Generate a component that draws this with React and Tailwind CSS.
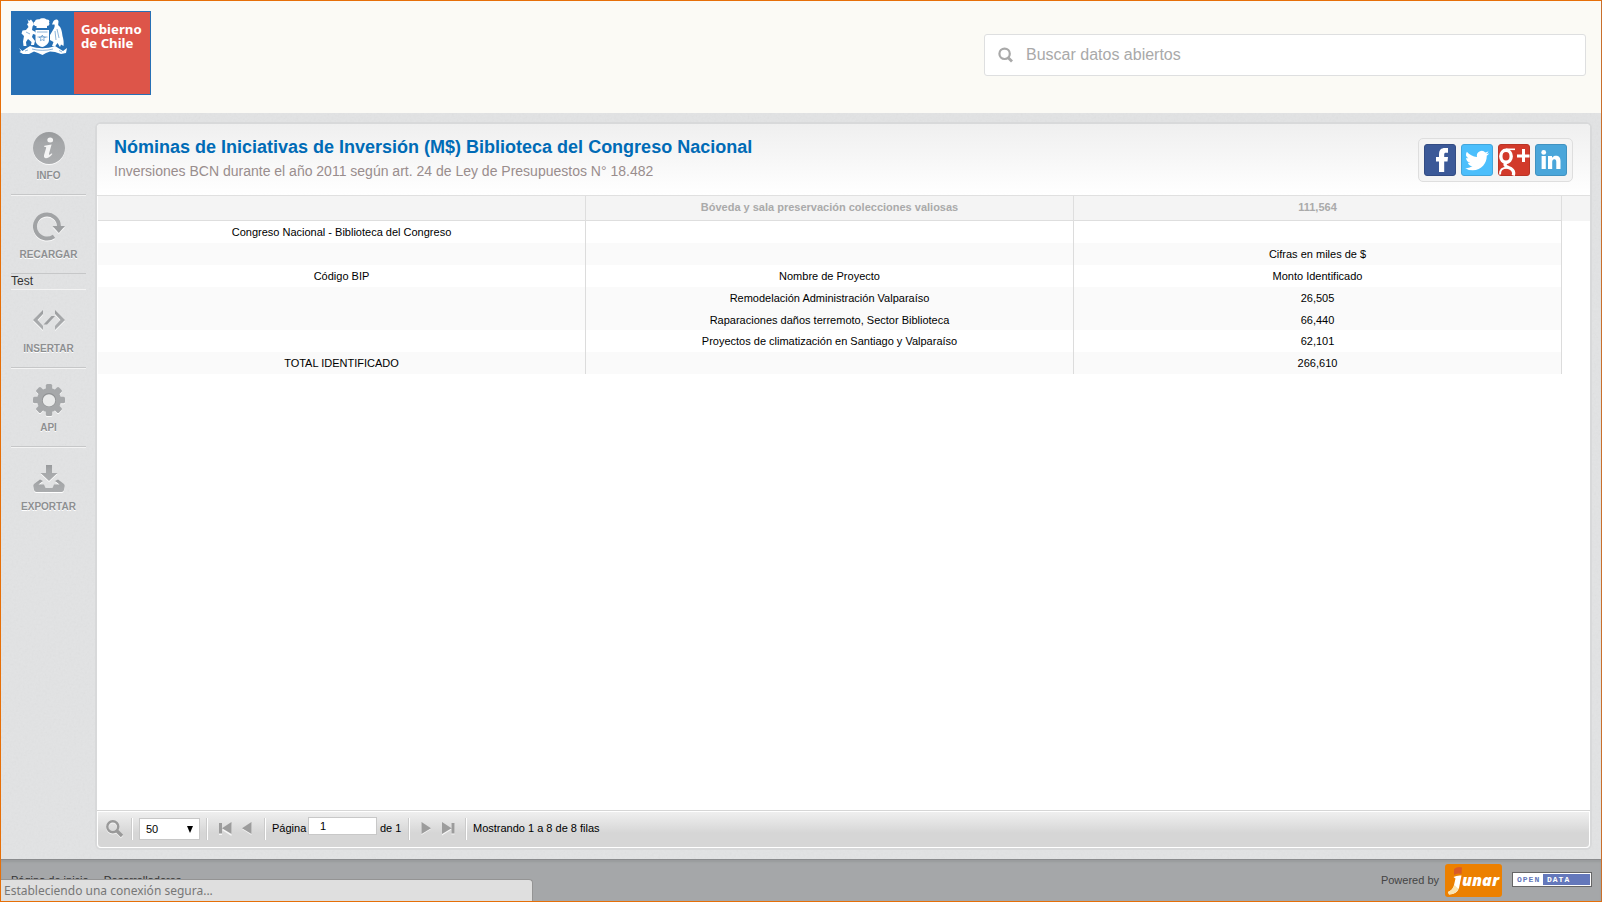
import React from 'react';

const columns = [
  { title: '' },
  { title: 'Bóveda y sala preservación colecciones valiosas' },
  { title: '111,564' },
];

const rows = [
  { cells: ['Congreso Nacional - Biblioteca del Congreso', '', ''], tone: 'h-[22px] bg-white' },
  { cells: ['', '', 'Cifras en miles de $'], tone: 'h-[22px] bg-[#fafafa]' },
  { cells: ['Código BIP', 'Nombre de Proyecto', 'Monto Identificado'], tone: 'h-[22px] bg-white' },
  { cells: ['', 'Remodelación Administración Valparaíso', '26,505'], tone: 'h-[22px] bg-[#fafafa]' },
  { cells: ['', 'Raparaciones daños terremoto, Sector Biblioteca', '66,440'], tone: 'h-[21px] bg-[#fafafa]' },
  { cells: ['', 'Proyectos de climatización en Santiago y Valparaíso', '62,101'], tone: 'h-[22px] bg-white' },
  { cells: ['TOTAL IDENTIFICADO', '', '266,610'], tone: 'h-[22px] bg-[#fafafa]' },
];

function Defs() {
  return (
    <svg width="0" height="0" className="absolute">
      <defs>
        <linearGradient id="metal" x1="0" y1="0" x2="0" y2="1">
          <stop offset="0" stopColor="#989a9c" />
          <stop offset="0.35" stopColor="#a5a7a9" />
          <stop offset="1" stopColor="#abadaf" />
        </linearGradient>
      </defs>
    </svg>
  );
}

function Grain() {
  return (
    <svg className="pointer-events-none absolute inset-0 h-full w-full opacity-[0.07]">
      <filter id="grain">
        <feTurbulence type="fractalNoise" baseFrequency="0.45" numOctaves="2" stitchTiles="stitch" />
        <feColorMatrix type="saturate" values="0" />
      </filter>
      <rect width="100%" height="100%" filter="url(#grain)" />
    </svg>
  );
}

function CoatOfArms() {
  return (
    <svg width="50" height="38" viewBox="0 0 50 38" className="block" fill="#fff">
      <path d="M17 8 C15 6 15 4 17 3.5 C17 1.5 20 1 21 1.5 C23 -0.3 27 -0.2 28.5 1.5 C31 1.2 32 3 31 4.5 C32 6.5 31 8 29 8 L29 10 L18.5 10 L18.5 8 Z" />
      <path d="M17.5 12 H31 V22 C31 26 27 28.5 24.2 29 C21 28.5 17.5 26 17.5 22 Z" />
      <path d="M9.5 1 L11 3 L13 1.5 L14.5 3.5 L16 6.5 L14.5 8.5 L14 12 L17.5 14 L18.5 17 L15 16 L14 19 L17 23 L16 27 L13 27 L13.5 24 L10 21 L8 24 L8.5 28 L5.5 28 L5 23.5 L6 18 L3.5 15.5 L4.5 12.5 L8 12 L10.5 9 L9 6 L10.5 5 Z" />
      <path d="M35 4 C36 1 40 0.5 40.5 3.5 C40.5 5.5 39.8 6.5 40.5 7.5 C43 9 44 13 44.5 18 C45.5 21 46 25 45.5 28 L43 26.5 L42 29 L39.5 25 L37 28.5 L34 28 L35.5 24 L32 22 L32 17 L35 12 C36.5 10 37 8 36.5 6.5 L34 6.5 Z" />
      <path d="M1 30 L4.5 33 L8 30.5 L12 28 C20 31 29 31 37 28 L41 30.5 L45 33 L49 30 L48 35 L43 36 L37 34 L32 33.5 L28 35 L24.5 37 L20 35 L16 33.5 L11 36 L5 36 L1.5 34 L3 33 Z" />
      <path d="M19 14 h10.5 M19.5 19 h10 M24.3 17 l1 2 2 .2 -1.5 1.5 .4 2 -1.9 -1 -1.9 1 .4 -2 -1.5 -1.5 2 -.2 z M14 31 c6 1.8 15 1.8 21 0 M7 33 l3 -1 M41 32.5 l3 1.5 M8 14 l4 2 M39 11 l2 9 M37 13 l1 9" fill="none" stroke="#2770b5" strokeWidth="0.8" opacity="0.65" />
    </svg>
  );
}

function Logo() {
  return (
    <div className="flex h-[84px] w-[140px] border border-[#2770b5] bg-[#dd5549]">
      <div className="h-full w-[62px] bg-[#2770b5] pl-[6px] pt-[6px]">
        <CoatOfArms />
      </div>
      <div className="pl-[7px] pt-[10px] font-['Noto_Sans',sans-serif] text-[13.2px] font-bold leading-[14px] text-white">
        <div>Gobierno</div>
        <div>de Chile</div>
      </div>
    </div>
  );
}

const icons = {
  info: (
    <svg width="32" height="33" viewBox="0 0 32 33">
      <circle cx="16" cy="17" r="16" fill="#fff" opacity="0.8" />
      <circle cx="16" cy="16" r="16" fill="url(#metal)" />
      <g fill="#f4f4f4">
        <ellipse cx="17.2" cy="8" rx="2.9" ry="2.5" />
        <path d="M11.4 13.8 L18.6 12.6 L16 21.8 C15.7 23.2 16.8 22.9 18.8 21.2 L19.4 22 C17 25 14.6 26.3 12.8 26.2 C10.8 26 10.7 24.4 11.2 22.6 L13.2 15.8 C13.4 15 12.6 14.8 11.2 15 Z" />
      </g>
    </svg>
  ),
  reload: (
    <svg width="32" height="30" viewBox="0 0 32 30">
      <g transform="translate(0 1)" fill="none" stroke="#fff" strokeWidth="4" opacity="0.8">
        <path d="M21 24.3 A12 12 0 1 1 26 14.5" />
      </g>
      <path d="M19.5 15.5 H32 L25.8 22 Z" fill="#fff" opacity="0.8" />
      <path d="M21 24.3 A12 12 0 1 1 26 14.5" fill="none" stroke="#a1a3a5" strokeWidth="4" />
      <path d="M19.5 14 H32 L25.8 21 Z" fill="#9d9fa1" />
    </svg>
  ),
  code: (
    <svg width="32" height="22" viewBox="0 0 32 22">
      <g fill="#fff" transform="translate(0 1)">
        <path d="M10 0 V4 L4.5 10 L10 16 V20 L0 10 Z M22 0 V4 L27.5 10 L22 16 V20 L32 10 Z" />
      </g>
      <path d="M10 0 V4 L4.5 10 L10 16 V20 L0 10 Z M22 0 V4 L27.5 10 L22 16 V20 L32 10 Z" fill="url(#metal)" />
      <path d="M10.5 14.5 L18.5 6 H22 L14 14.5 Z" fill="#9d9fa1" />
    </svg>
  ),
  gear: (
    <svg width="32" height="33" viewBox="0 0 32 33">
      <g id="gear-shape">
        <g fill="#fff" opacity="0.8" transform="translate(0 1)">
          {[0, 45, 90, 135].map((a) => (
            <rect key={a} x="12.8" y="0" width="6.4" height="32" rx="1.5" transform={`rotate(${a} 16 16)`} />
          ))}
        </g>
        <g fill="#a6a8aa">
          {[0, 45, 90, 135].map((a) => (
            <rect key={a} x="12.8" y="0" width="6.4" height="32" rx="1.5" transform={`rotate(${a} 16 16)`} />
          ))}
          <circle cx="16" cy="16" r="12" />
        </g>
        <circle cx="16" cy="16" r="7" fill="#8f9193" />
        <circle cx="16" cy="16.4" r="6.2" fill="#e9eaea" />
      </g>
    </svg>
  ),
  download: (
    <svg width="32" height="28" viewBox="0 0 32 28">
      <g fill="#fff" transform="translate(0 1)">
        <path d="M13 0 H19 V8 H24.5 L16 16 L7.5 8 H13 Z" />
        <path d="M7 14.5 L10 16 L5.5 19.5 H11 L12.5 23 H19.5 L21 19.5 H26.5 L22 16 L25 14.5 L31 19 Q32 20 31.7 21.5 L31 25 Q30.6 27 28.6 27 H3.4 Q1.4 27 1 25 L0.3 21.5 Q0 20 1 19 Z" />
      </g>
      <path d="M13 0 H19 V8 H24.5 L16 16 L7.5 8 H13 Z" fill="url(#metal)" />
      <path d="M7 14.5 L10 16 L5.5 19.5 H11 L12.5 23 H19.5 L21 19.5 H26.5 L22 16 L25 14.5 L31 19 Q32 20 31.7 21.5 L31 25 Q30.6 27 28.6 27 H3.4 Q1.4 27 1 25 L0.3 21.5 Q0 20 1 19 Z" fill="url(#metal)" />
    </svg>
  ),
};

function SideItem({ icon, label, first, last }) {
  return (
    <li
      className={
        'flex h-[79px] flex-col items-center border-b border-t pt-[15px] ' +
        (first ? 'border-t-transparent ' : 'border-t-[#f3f3f3] ') +
        (last ? 'border-b-transparent' : 'border-b-[#c6c7c8]')
      }
    >
      <span className="flex h-8 items-center justify-center">{icons[icon]}</span>
      <span className="mt-[6px] text-[10px] font-bold leading-[12px] text-[#8d8f91] [text-shadow:0_1px_0_#fff]">
        {label}
      </span>
    </li>
  );
}

function Sidebar() {
  return (
    <ul className="relative ml-[10px] mt-[3px] w-[75px] shrink-0">
      <SideItem icon="info" label="INFO" first />
      <SideItem icon="reload" label="RECARGAR" />
      <li className="h-[15px] text-[12px] leading-[15px] text-[#333]">Test</li>
      <SideItem icon="code" label="INSERTAR" />
      <SideItem icon="gear" label="API" />
      <SideItem icon="download" label="EXPORTAR" last />
    </ul>
  );
}

function Social() {
  return (
    <div className="mr-[17px] mt-[14px] flex h-[44px] w-[155px] gap-[5px] rounded-[5px] border border-[#dedede] bg-[#f4f4f4] pl-[5px] pt-[5px]">
      <svg width="32" height="32" viewBox="0 0 32 32">
        <rect x="0.5" y="0.5" width="31" height="31" rx="2.5" fill="#3b5998" stroke="#334c83" />
        <path d="M15 28 V17.5 H12 V13 H15 V10.5 C15 6 17 4 21 4 H24 V8.8 H22 C20.5 8.8 20.2 9.4 20.2 11 V13 H24 L23.5 17.5 H20.2 V28 Z" fill="#fff" />
      </svg>
      <svg width="32" height="32" viewBox="0 0 32 32">
        <rect x="0.5" y="0.5" width="31" height="31" rx="2.5" fill="#4cbffc" stroke="#42a6dc" />
        <path transform="translate(4.2 4.6) scale(1)" d="M23.95 4.57a10 10 0 01-2.82.77 4.96 4.96 0 002.16-2.72c-.95.55-2 .95-3.13 1.18a4.92 4.92 0 00-8.38 4.48C7.69 8.09 4.07 6.13 1.64 3.16a4.92 4.92 0 001.52 6.57 4.9 4.9 0 01-2.23-.61v.06a4.92 4.92 0 003.95 4.83 5 5 0 01-2.21.08 4.94 4.94 0 004.6 3.42A9.87 9.87 0 010 19.54a14 14 0 007.55 2.21c9.05 0 14-7.5 14-13.98 0-.21 0-.42-.02-.63a9.94 9.94 0 002.46-2.55z" fill="#fff" />
      </svg>
      <svg width="32" height="32" viewBox="0 0 32 32">
        <rect x="0.5" y="0.5" width="31" height="31" rx="2.5" fill="#d23a2b" stroke="#b93426" />
        <g fill="none" stroke="#fff">
          <ellipse cx="8" cy="12.3" rx="5.2" ry="6" strokeWidth="3.4" />
          <path d="M8 5.3 H17" strokeWidth="1.6" />
          <path d="M9 18 C5.5 20.5 7 22 10.5 23.5 C15 25.2 16.5 28 15.2 31.5" strokeWidth="3.2" />
          <path d="M10 23.8 C4 23.5 1.8 26 2 30.5" strokeWidth="2" />
          <path d="M19 12 H31.5 M25.5 5 V18" strokeWidth="3" />
        </g>
      </svg>
      <svg width="32" height="32" viewBox="0 0 32 32">
        <rect x="0.5" y="0.5" width="31" height="31" rx="2.5" fill="#4aa6da" stroke="#4192c0" />
        <g fill="#fff">
          <circle cx="8.7" cy="8.4" r="2.4" />
          <rect x="6.6" y="12" width="4.2" height="13" />
          <path d="M13 12 H17 V13.8 C18 12.3 19.4 11.7 21 11.7 C24.2 11.7 25.5 13.8 25.5 17 V25 H21.3 V18 C21.3 16.2 20.8 15.2 19.4 15.2 C17.9 15.2 17.2 16.3 17.2 18 V25 H13 Z" />
        </g>
      </svg>
    </div>
  );
}

function Separator({ className }) {
  return <span className={'h-[22px] w-[2px] shrink-0 border-l border-r border-l-[#cbcbcb] border-r-white ' + className} />;
}

function Pager() {
  return (
    <div className="flex h-[38px] items-start rounded-b-[4px] border-t border-t-[#d6d6d6] text-[11px] text-black">
      <div className="flex h-[37px] w-full items-start rounded-b-[4px] border border-white bg-[linear-gradient(#efefef,#d6d6d6_60%,#d6d6d6)] pt-[6px]">
        <svg width="18" height="19" viewBox="0 0 18 19" className="ml-[8px] mt-[2px] shrink-0">
          <g fill="none" transform="translate(0 1)" stroke="#f4f4f4">
            <circle cx="6.8" cy="6.8" r="5.5" strokeWidth="2.4" />
            <path d="M11 11 L16 16" strokeWidth="3.4" />
          </g>
          <g fill="none" stroke="#999">
            <circle cx="6.8" cy="6.8" r="5.5" strokeWidth="2.4" />
            <path d="M11 11 L16 16" strokeWidth="3.4" />
          </g>
        </svg>
        <Separator className="ml-[7px]" />
        <div className="ml-[6px] flex h-[22px] w-[61px] shrink-0 items-center justify-between border border-[#c8c8c8] bg-white pl-[6px] pr-[6px]">
          <span>50</span>
          <svg width="6" height="7" viewBox="0 0 6 7"><path d="M0 0 H6 L3 7 Z" /></svg>
        </div>
        <Separator className="ml-[6px]" />
        <svg width="13" height="14" viewBox="0 0 13 14" className="ml-[11px] mt-[4px] shrink-0">
          <path d="M0 1 H3 V12 H0 Z M12.5 1 V13 L3 7 Z" fill="#f6f6f6" transform="translate(0 1)" />
          <path d="M0 1 H3 V11.5 H0 Z M12.5 0 V12 L3 6.2 Z" fill="#9c9c9c" />
        </svg>
        <svg width="10" height="14" viewBox="0 0 10 14" className="ml-[10px] mt-[4px] shrink-0">
          <path d="M9.5 1 V13 L0 7 Z" fill="#f6f6f6" />
          <path d="M9.5 0 V12 L0 6.2 Z" fill="#9c9c9c" />
        </svg>
        <Separator className="ml-[12px]" />
        <span className="ml-[6px] mt-[4px] w-[36px] shrink-0 leading-[13px]">Página</span>
        <div className="-mt-px h-[18px] w-[69px] shrink-0 border border-[#c8c8c8] bg-white pl-[11px] leading-[16px]">1</div>
        <span className="ml-[3px] mt-[4px] w-[28px] shrink-0 leading-[13px]">de 1</span>
        <Separator className="" />
        <svg width="11" height="14" viewBox="0 0 11 14" className="ml-[11px] mt-[4px] shrink-0">
          <path d="M0 1 V13 L9.5 7 Z" fill="#f6f6f6" transform="translate(0.5 0)" />
          <path d="M0.5 0 V12 L10 6.2 Z" fill="#9c9c9c" />
        </svg>
        <svg width="13" height="14" viewBox="0 0 13 14" className="ml-[10px] mt-[4px] shrink-0">
          <path d="M12.5 1 H9.5 V12 H12.5 Z M0 1 V13 L9.5 7 Z" fill="#f6f6f6" transform="translate(0 0.5)" />
          <path d="M12.5 1 H9.5 V11.5 H12.5 Z M0 0 V12 L9.5 6.2 Z" fill="#9c9c9c" />
        </svg>
        <Separator className="ml-[10px]" />
        <span className="ml-[6px] mt-[4px] whitespace-nowrap leading-[13px]">Mostrando 1 a 8 de 8 filas</span>
      </div>
    </div>
  );
}

function Panel() {
  return (
    <main className="relative ml-[11px] mt-[11px] flex h-[724px] w-[1493px] flex-col rounded-[4px] bg-white shadow-[0_0_0_2px_#d8d9da]">
      <div className="flex h-[72px] shrink-0 justify-between rounded-t-[4px] border-b border-b-[#e0e0e0] bg-[linear-gradient(#efefef,#ffffff)]">
        <div className="pl-[17px] pt-[12px]">
          <h1 className="text-[18px] font-bold leading-[22px] text-[#006bb6]">
            Nóminas de Iniciativas de Inversión (M$) Biblioteca del Congreso Nacional
          </h1>
          <p className="mt-[4px] text-[14px] leading-[18px] text-[#998d8d]">
            Inversiones BCN durante el año 2011 según art. 24 de Ley de Presupuestos N° 18.482
          </p>
        </div>
        <Social />
      </div>
      <div className="flex-1 pl-px text-[11px]">
        <div className="flex h-[25px] bg-[#f4f4f4]">
          {columns.map((c, i) => (
            <div
              key={i}
              className="w-[488px] border-b border-r border-[#dedede] text-center font-bold leading-[23px] text-[#aaa]"
            >
              {c.title}
            </div>
          ))}
        </div>
        {rows.map((r, i) => (
          <div key={i} className={'flex w-[1464px] ' + r.tone}>
            {r.cells.map((c, j) => (
              <div key={j} className="w-[488px] border-r border-[#dcdcdc] text-center leading-[22px] text-black">
                {c}
              </div>
            ))}
          </div>
        ))}
      </div>
      <Pager />
    </main>
  );
}

function Footer() {
  return (
    <footer className="flex h-[42px] justify-between border-t border-t-[#8a8b8d] bg-[#a5a7a9] shadow-[inset_0_2px_2px_#999b9d] text-[11px]">
      <nav className="flex gap-[15px] pl-[10px] pt-[14px] leading-[13px] text-[#333]">
        <span>Página de inicio</span>
        <span>Desarrolladores</span>
      </nav>
      <div className="flex items-start pr-[9px] pt-[4px] text-[#444]">
        <span className="mt-[10px] leading-[13px]">Powered by</span>
        <svg width="57" height="33" viewBox="0 0 57 33" className="ml-[6px]">
          <rect width="57" height="33" rx="3" fill="#ec8000" />
          <path d="M9 5 Q13 2 17 3.5 L16.5 10 Q12 8.500 9 11 Z" fill="#d95b27" />
          <path d="M8.500 13 Q12 11 16.500 11.500 L14 24 Q12 30 4 30.500 L3 28 Q8 26 9 21 L10.500 14.500 Z" fill="#fff" />
          <path d="M3 28 Q8 26 9.500 21 L13.500 25 Q11 30 4 30.500 Z" fill="#fbe3ae" />
          <text x="17" y="22" fill="#fff" fontFamily="Open Sans, sans-serif" fontWeight="800" fontStyle="italic" fontSize="15" textLength="37" lengthAdjust="spacingAndGlyphs">unar</text>
        </svg>
        <div className="ml-[10px] mt-[8px] flex h-[15px] w-[80px] border border-[#666] bg-white p-px font-['Liberation_Mono',monospace] text-[8px] font-bold leading-[11px]">
          <span className="w-[29px] pl-[3px] tracking-[1px] text-[#6478bb]">OPEN</span>
          <span className="flex-1 bg-[#6478bb] pl-[4px] tracking-[1px] text-white">DATA</span>
        </div>
      </div>
    </footer>
  );
}

export default function App() {
  return (
    <div className="relative flex h-[902px] w-[1602px] flex-col overflow-hidden border border-[#e66f08] border-r-[#c96f2b] bg-[#e2e3e4] font-['Liberation_Sans',Arial,sans-serif]">
      <Defs />
      <header className="flex h-[112px] shrink-0 justify-between bg-[#fbfaf5] pl-[10px] pr-[15px] pt-[10px]">
        <Logo />
        <div className="mt-[23px] flex h-[42px] w-[602px] items-center rounded-[3px] border border-[#dedfe0] bg-white pl-[13px]">
          <svg width="16" height="16" viewBox="0 0 16 16" fill="none" stroke="#a9a9a9">
            <circle cx="6.6" cy="6.8" r="5.2" strokeWidth="2.2" />
            <path d="M9.500 10 L14 14.500" strokeWidth="2.800" />
          </svg>
          <span className="ml-[12px] text-[16px] text-[#a9a9a9]">Buscar datos abiertos</span>
        </div>
      </header>
      <div className="relative flex h-[746px] shrink-0">
        <Grain />
        <Sidebar />
        <Panel />
      </div>
      <Footer />
      <div className="absolute bottom-0 left-0 h-[22px] w-[532px] rounded-tr-[4px] border-r border-t border-[#949494] bg-[#dfdfdf] pl-[3px] font-['Noto_Sans',sans-serif] text-[12px] leading-[21px] text-[#777]">
        Estableciendo una conexión segura...
      </div>
    </div>
  );
}
